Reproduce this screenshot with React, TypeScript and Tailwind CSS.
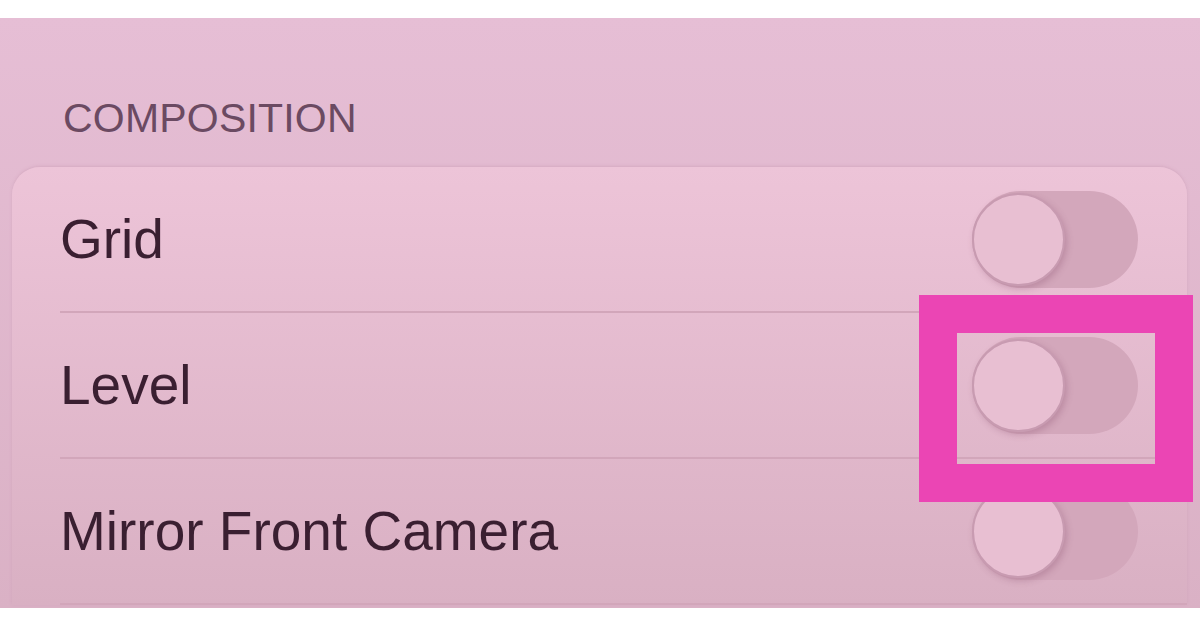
import React from 'react';

const rows = ['Grid', 'Level', 'Mirror Front Camera'];

const Toggle: React.FC = () => (
  <div className="relative h-[97px] w-[166px] shrink-0 rounded-full bg-[#d3a7bb]">
    <div className="absolute left-0 top-[2px] h-[93px] w-[93px] rounded-full border-2 border-[#c89bb1] bg-[#e8bfd2] shadow-[2px_3px_6px_rgba(120,60,90,0.25)]" />
  </div>
);

export default function App() {
  return (
    <div
      className="h-[628px] w-[1200px] overflow-hidden bg-white pt-[18px]"
      style={{ fontFamily: '"Liberation Sans", Arial, sans-serif' }}
    >
      <div className="relative h-[590px] overflow-hidden bg-gradient-to-b from-[#e6bed5] to-[#dab1c5] pl-[12px] pr-[13px] pt-[80px]">
        <h2 className="pl-[51px] text-[41px] leading-[41px] tracking-[0.2px] text-[#6b4a62]">COMPOSITION</h2>

        <div className="mt-[28px] rounded-t-[28px] bg-gradient-to-b from-[#edc4d8] to-[#d9b0c3] shadow-[0_-1px_3px_rgba(190,140,165,0.35)]">
          {rows.map((label) => (
            <div key={label}>
              <div className="flex h-[144px] items-center justify-between pl-[48px] pr-[49px]">
                <span className="text-[55px] leading-[55px] text-[#3a1f31]">{label}</span>
                <Toggle />
              </div>
              <div className="ml-[48px] h-[2px] bg-[#d2a6ba]" />
            </div>
          ))}
        </div>

        {/* highlight box over the Level toggle */}
        <div className="absolute left-[919px] top-[277px] h-[207px] w-[274px] border-[38px] border-[#eb45b4]" />
      </div>
    </div>
  );
}
